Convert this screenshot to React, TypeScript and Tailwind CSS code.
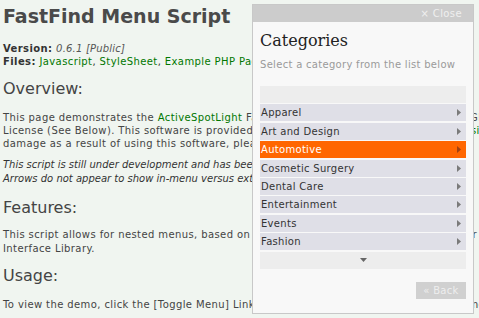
const categories = [
  'Apparel',
  'Art and Design',
  'Automotive',
  'Cosmetic Surgery',
  'Dental Care',
  'Entertainment',
  'Events',
  'Fashion',
];

function RightArrow({ active }: { active?: boolean }) {
  return (
    <svg width="4" height="7" viewBox="0 0 4 7" className="shrink-0">
      <path d="M0 0 L4 3.5 L0 7 Z" fill={active ? '#a04010' : '#7a7a7a'} />
    </svg>
  );
}

function CategoryPanel() {
  return (
    <div className="absolute left-[252px] top-[4px] w-[222px] h-[310px] border border-[#c8c8c8] bg-[#f8f8f8] flex flex-col">
      {/* Header */}
      <div className="h-[17px] bg-[#cccccc] flex items-center justify-end pr-[11px] text-[10px] tracking-[0.4px] text-[#efefef]">
        × Close
      </div>

      <div className="px-[7px] flex flex-col">
        <h2 className="mt-[8.5px] text-[16px] leading-[20px] text-[#222] font-['DejaVu_Serif',serif]">
          Categories
        </h2>
        <p className="mt-[7px] text-[10px] leading-[13px] tracking-[0.3px] text-[#9a9a9a]">
          Select a category from the list below
        </p>

        {/* Category list */}
        <div className="mt-[15.5px] flex flex-col gap-[1.4px]">
          <div className="h-[17px] bg-[#ededed]" />
          {categories.map((c) => {
            const active = c === 'Automotive';
            return (
              <div
                key={c}
                className={`h-[17px] flex items-center justify-between pl-[1px] pr-[5px] text-[10px] tracking-[0.3px] ${
                  active ? 'bg-[#ff6600] text-white' : 'bg-[#dfdfe7] text-[#333]'
                }`}
              >
                <span>{c}</span>
                <RightArrow active={active} />
              </div>
            );
          })}
          <div className="h-[17px] bg-[#ededed] flex items-center justify-center">
            <svg width="7" height="4" viewBox="0 0 7 4">
              <path d="M0 0 L7 0 L3.5 4 Z" fill="#666" />
            </svg>
          </div>
        </div>

        <div className="mt-[13px] flex justify-end">
          <button className="w-[50px] h-[17px] bg-[#d0d0d0] text-[10px] tracking-[0.3px] text-[#eeeeee]">
            « Back
          </button>
        </div>
      </div>
    </div>
  );
}

export default function App() {
  const link = 'text-[#007700]';
  return (
    <div className="relative w-[479px] h-[318px] overflow-hidden bg-[#f0f5f0] font-['DejaVu_Sans',Verdana,sans-serif] text-[#444]">
      <div className="pl-[3px] pt-[5px] whitespace-nowrap">
        <h1 className="text-[19px] leading-[22px] font-bold text-[#4a4a4a]">FastFind Menu Script</h1>

        <div className="mt-[15px] text-[10px] leading-[13px] tracking-[0.4px] text-[#333]">
          <div>
            <b>Version:</b> <i className="text-[#555] tracking-[0.2px]">0.6.1 [Public]</i>
          </div>
          <div>
            <b>Files:</b> <span className={link}>Javascript</span>, <span className={link}>StyleSheet</span>,{' '}
            <span className={link}>Example PHP Page</span>, <span className={link}>Interface Library</span>
          </div>
        </div>

        <h3 className="mt-[10.5px] text-[16px] leading-[20px] text-[#444]">Overview:</h3>
        <div className="mt-[12.5px] text-[10px] leading-[13px] tracking-[0.4px]">
          <div>
            This page demonstrates the <span className={link}>ActiveSpotLight</span> FastFind Menu Script, released under the GPL
          </div>
          <div>
            License (See Below). This software is provided as-is, and the author accepts no <span className={link}>responsibility</span>
          </div>
          <div>damage as a result of using this software, please use at your own risk and discretion.</div>
        </div>
        <div className="mt-[8px] text-[10px] leading-[13.5px] italic text-[#333]">
          <div>This script is still under development and has been tested only in IE6, Firefox and Opera, and</div>
          <div>Arrows do not appear to show in-menu versus external menus at this time, see the bug list. A</div>
        </div>

        <h3 className="mt-[13px] text-[16px] leading-[20px] text-[#444]">Features:</h3>
        <div className="mt-[10px] text-[10px] leading-[14px] tracking-[0.4px]">
          <div>This script allows for nested menus, based on the menu components of the Yahoo! User or</div>
          <div>Interface Library.</div>
        </div>

        <h3 className="mt-[9.5px] text-[16px] leading-[20px] text-[#444]">Usage:</h3>
        <div className="mt-[12px] text-[10px] leading-[13px] tracking-[0.4px]">
          To view the demo, click the [Toggle Menu] Link above, and select a category from the menu list.
        </div>
      </div>

      <CategoryPanel />
    </div>
  );
}
